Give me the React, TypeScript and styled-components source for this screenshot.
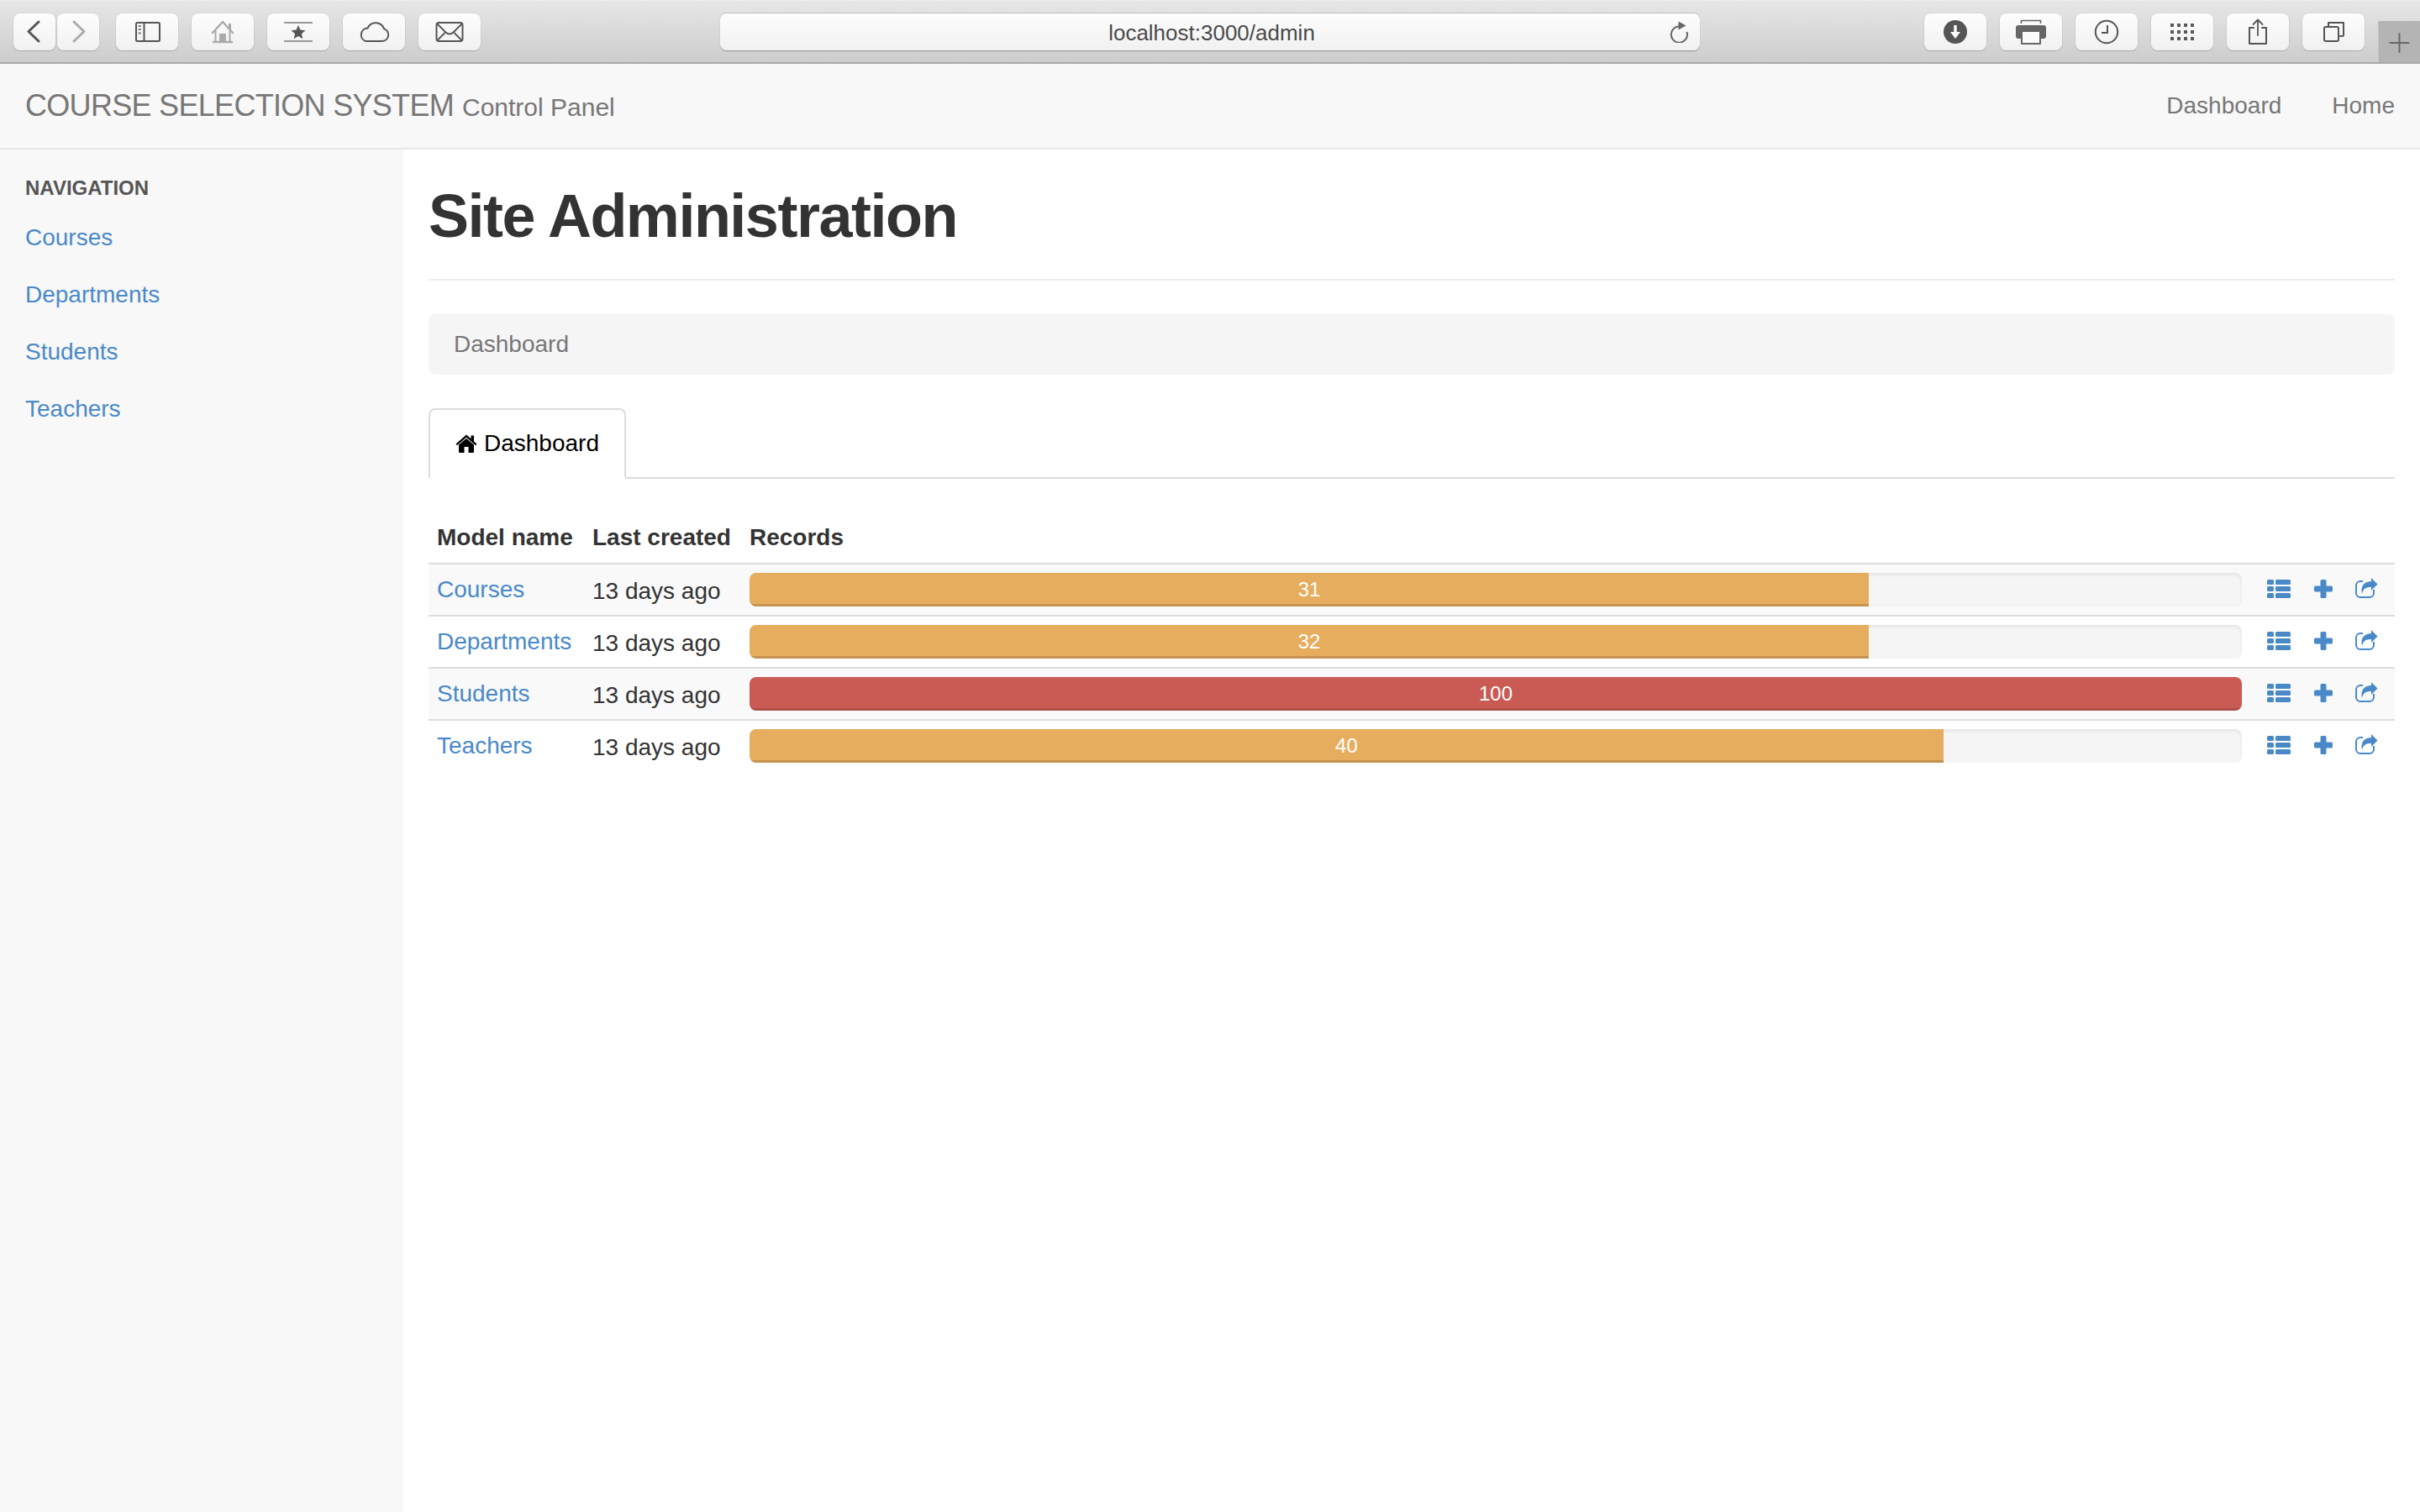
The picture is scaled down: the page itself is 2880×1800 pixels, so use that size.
import React from "react";
import styled, { createGlobalStyle } from "styled-components";

const Global = createGlobalStyle`
  html, body { margin: 0; padding: 0; background: #fff; }
  body { font-family: "Liberation Sans", Arial, sans-serif; font-size: 28px; line-height: 40px; color: #333; }
  * { box-sizing: border-box; }
`;

const LINK = "#4a89c8";

const Page = styled.div`
  display: flex;
  flex-direction: column;
  min-height: 100vh;
`;

/* ---------- browser chrome ---------- */
const Chrome = styled.header`
  display: flex;
  height: 76px;
  padding: 16px 0 0 16px;
  background: linear-gradient(#e6e6e6, #cdcdcd);
  border-top: 1px solid #efefef;
  border-bottom: 2px solid #aaaaaa;
`;
const ChromeGroup = styled.div<{ $gap: number; $left?: number }>`
  display: flex;
  gap: ${(p) => p.$gap}px;
  margin-left: ${(p) => p.$left ?? 0}px;
  margin-top: -1px;
`;
const ToolButton = styled.div<{ $w: number }>`
  width: ${(p) => p.$w}px;
  height: 44px;
  border-radius: 8px;
  background: linear-gradient(#fdfdfd, #f1f1f1);
  box-shadow: 0 1px 1px #a8a8a8, 0 0 0 1px rgba(0, 0, 0, 0.04);
  display: flex;
  svg { display: block; }
`;
const NavPair = styled.div`
  display: flex;
  gap: 2px;
  margin-right: 4px;
`;
const Address = styled.div`
  width: 1166px;
  height: 44px;
  margin-left: 285px;
  margin-top: -1px;
  border-radius: 8px;
  background: linear-gradient(#fdfdfd, #f1f1f1);
  box-shadow: 0 1px 1px #8f8f8f, 0 -1px 0 #bdbdbd;
  display: grid;
  grid-template-columns: 1fr auto 1fr;
  align-items: center;
  font-size: 26px;
  color: #4a4a4a;
`;
const AddressText = styled.span`
  grid-column: 2;
  position: relative;
  left: 2px;
  top: 1px;
`;
const ReloadSlot = styled.span`
  grid-column: 3;
  justify-self: end;
  display: flex;
  margin-right: 12px;
`;
const NewTab = styled.div`
  width: 50px;
  height: 49px;
  margin-left: 16px;
  margin-top: 8px;
  background: #b4b4b4;
  border-left: 1px solid #c4c4c4;
  display: flex;
`;

const IconBox = ({ w, children }: { w: number; children: React.ReactNode }) => (
  <svg width={w} height={44} viewBox={`0 0 ${w} 44`} fill="none" strokeLinecap="round" strokeLinejoin="round">
    {children}
  </svg>
);

const Back = () => (
  <IconBox w={50}><path d="M30 10 L18 21.5 L30 33" stroke="#555" strokeWidth="3" /></IconBox>
);
const Forward = () => (
  <IconBox w={50}><path d="M20 10 L32 21.5 L20 33" stroke="#aaa" strokeWidth="3" /></IconBox>
);
const SidebarIcon = () => (
  <IconBox w={74}>
    <rect x="24" y="11" width="28" height="22" rx="1.5" stroke="#555" strokeWidth="2" />
    <path d="M33.5 11 V33" stroke="#555" strokeWidth="2" />
    <path d="M26.5 15 H30 M26.5 19 H30 M26.5 23.5 H30" stroke="#888" strokeWidth="2" strokeLinecap="butt" />
  </IconBox>
);
const HomeIcon = () => (
  <IconBox w={74}>
    <path d="M25 23 L37 10 L49 23" stroke="#aaa" strokeWidth="2.4" />
    <path d="M28.5 21 V33 M45.5 21 V33" stroke="#aaa" strokeWidth="2" />
    <path d="M25 34 H49" stroke="#aaa" strokeWidth="2.4" strokeLinecap="butt" />
    <rect x="33" y="24" width="8" height="9" fill="#aaa" />
    <rect x="44" y="12" width="3" height="7" fill="#aaa" />
  </IconBox>
);
const StarIcon = () => (
  <IconBox w={74}>
    <path d="M20 11 H54 M20 33 H54" stroke="#999" strokeWidth="2" strokeLinecap="butt" />
    <path d="M37 14 L39.4 19.6 L45.5 20.2 L40.9 24.2 L42.3 30.2 L37 27 L31.7 30.2 L33.1 24.2 L28.5 20.2 L34.6 19.6 Z" fill="#555" />
  </IconBox>
);
const CloudIcon = () => (
  <IconBox w={74}>
    <path d="M27 33 H47 A7.6 7.6 0 0 0 49 18.2 A10.5 10.5 0 0 0 29.5 17.5 A8 8 0 0 0 27 33 Z" stroke="#555" strokeWidth="2" />
  </IconBox>
);
const MailIcon = () => (
  <IconBox w={74}>
    <rect x="21.5" y="11" width="31" height="22" rx="3" stroke="#555" strokeWidth="2" />
    <path d="M22 12 L32.5 22.5 Q37 26.5 41.5 22.5 L52 12 M22.5 32 L31 23.5 M51.5 32 L43 23.5" stroke="#555" strokeWidth="1.8" />
  </IconBox>
);
const DownloadIcon = () => (
  <IconBox w={74}>
    <circle cx="37" cy="22" r="14" fill="#555" />
    <path d="M35.3 14 H38.7 V22 H43 L37 30 L31 22 H35.3 Z" fill="#fff" />
  </IconBox>
);
const PrintIcon = () => (
  <IconBox w={74}>
    <path d="M25.5 12 V8.5 H48.5 V12" stroke="#666" strokeWidth="1.6" strokeLinecap="butt" strokeLinejoin="miter" />
    <path d="M22 14 H52 A3 3 0 0 1 55 17 V27 A3 3 0 0 1 52 30 H22 A3 3 0 0 1 19 27 V17 A3 3 0 0 1 22 14 Z" fill="#666" />
    <rect x="26" y="21" width="22" height="15" fill="#fbfbfb" stroke="#666" strokeWidth="2" />
  </IconBox>
);
const ClockIcon = () => (
  <IconBox w={74}>
    <circle cx="37" cy="22" r="13.2" stroke="#555" strokeWidth="2" />
    <path d="M38 14 V23 H31" stroke="#555" strokeWidth="2" strokeLinecap="butt" strokeLinejoin="miter" />
  </IconBox>
);
const GridIcon = () => {
  const cells: React.ReactNode[] = [];
  [12, 20, 28].forEach((y) =>
    [23, 31, 39, 47].forEach((x) =>
      cells.push(<rect key={`${x}-${y}`} x={x} y={y} width="4" height="4" fill="#5a5a5a" />)
    )
  );
  return <IconBox w={74}>{cells}</IconBox>;
};
const ShareIcon = () => (
  <IconBox w={74}>
    <path d="M32 17 H27 V36 H47 V17 H42" stroke="#555" strokeWidth="2" />
    <path d="M37 7.5 V26 M31.5 13 L37 7.5 L42.5 13" stroke="#555" strokeWidth="1.8" />
  </IconBox>
);
const TabsIcon = () => (
  <IconBox w={74}>
    <rect x="26" y="16" width="17" height="17" rx="2" stroke="#555" strokeWidth="2" />
    <path d="M31 15 V11 H49 V26 Q49 27 47.5 27 H45" stroke="#555" strokeWidth="2" />
  </IconBox>
);

/* ---------- site navbar ---------- */
const Navbar = styled.nav`
  height: 102px;
  padding: 0 30px;
  background: #f8f8f8;
  border-bottom: 2px solid #e7e7e7;
  display: flex;
  align-items: center;
  color: #777;
`;
const Brand = styled.div`
  font-size: 36px;
  letter-spacing: -0.7px;
  display: flex;
  align-items: baseline;
  gap: 10px;
  padding-top: 2px;
  white-space: nowrap;
`;
const BrandSmall = styled.span`
  font-size: 30px;
  letter-spacing: 0;
`;
const NavLinks = styled.div`
  margin-left: auto;
  display: flex;
  gap: 60px;
`;

/* ---------- layout ---------- */
const Body = styled.div`
  flex: 1;
  display: flex;
`;
const Sidebar = styled.aside`
  width: 480px;
  flex: none;
  padding-top: 29px;
  background: #f8f8f8;
`;
const SideHeader = styled.div`
  padding: 0 30px;
  margin-bottom: 8px;
  font-size: 24px;
  line-height: 34px;
  font-weight: 700;
  color: #555;
`;
const SideLink = styled.a`
  display: block;
  padding: 14px 30px;
  color: ${LINK};
`;
const Main = styled.main`
  flex: 1;
  min-width: 0;
  padding: 40px 30px 0;
`;
const Title = styled.h1`
  margin: 0 0 40px;
  padding-bottom: 35px;
  border-bottom: 2px solid #eee;
  font-size: 72px;
  line-height: 79px;
  font-weight: 700;
  letter-spacing: -1.5px;
  color: #333;
`;
const Crumb = styled.div`
  height: 72px;
  padding: 16px 30px;
  margin-bottom: 40px;
  border-radius: 8px;
  background: #f5f5f5;
  color: #777;
`;
const TabBar = styled.div`
  display: flex;
  height: 84px;
  margin-bottom: 40px;
  border-bottom: 2px solid #ddd;
`;
const Tab = styled.div`
  height: 84px;
  padding: 20px 30px;
  display: flex;
  align-items: center;
  gap: 8px;
  background: #fff;
  border: 2px solid #ddd;
  border-bottom-color: #fff;
  border-radius: 8px 8px 0 0;
  color: #000;
`;

/* ---------- table ---------- */
const Table = styled.table`
  width: 100%;
  table-layout: fixed;
  border-collapse: collapse;
`;
const ColName = styled.col`
  width: 185px;
`;
const ColCreated = styled.col`
  width: 187px;
`;
const ColActions = styled.col`
  width: 172px;
`;
const Head = styled.th`
  padding: 10px;
  text-align: left;
  font-weight: 700;
  color: #333;
  white-space: nowrap;
  border-bottom: 2px solid #ddd;
`;
const Row = styled.tr<{ $striped: boolean }>`
  background: ${(p) => (p.$striped ? "#f9f9f9" : "#fff")};
`;
const Cell = styled.td`
  height: 62px;
  padding: 10px;
  vertical-align: top;
  border-top: 2px solid #ddd;
`;
const ModelLink = styled.a`
  color: ${LINK};
  white-space: nowrap;
`;
const AgoCell = styled(Cell)`
  padding: 12px 10px 8px;
  white-space: nowrap;
`;
const Track = styled.div`
  height: 40px;
  border-radius: 8px;
  overflow: hidden;
  background: #f5f5f5;
  box-shadow: inset 0 2px 4px rgba(0, 0, 0, 0.08);
`;
const Fill = styled.div<{ $tone: "warn" | "danger" }>`
  height: 100%;
  background: ${(p) => (p.$tone === "danger" ? "#ca5b54" : "#e7ad5e")};
  box-shadow: inset 0 -3px 0 rgba(0, 0, 0, 0.15);
  color: #fff;
  font-size: 24px;
  line-height: 40px;
  text-align: center;
`;
const Actions = styled.div`
  display: flex;
  align-items: center;
  height: 38px;
  padding-left: 10px;
  color: ${LINK};
  svg { display: block; }
`;
const ActionList = styled.a`
  margin-right: 28px;
`;
const ActionAdd = styled.a`
  margin-right: 27px;
`;
const ActionShare = styled.a`
  margin-top: -3px;
`;

const ListGlyph = () => (
  <svg width="28" height="22" viewBox="0 0 28 22" fill="currentColor">
    {[0, 8, 16].map((y) => (
      <g key={y}>
        <rect x="0" y={y} width="8" height="6" rx="1.5" />
        <rect x="10" y={y} width="18" height="6" rx="1.5" />
      </g>
    ))}
  </svg>
);
const PlusGlyph = () => (
  <svg width="22" height="22" viewBox="0 0 22 22" fill="currentColor">
    <rect x="7.5" y="0" width="7" height="22" rx="1.6" />
    <rect x="0" y="7.5" width="22" height="7" rx="1.6" />
  </svg>
);
const ShareGlyph = () => (
  <svg width="27" height="24" viewBox="0 0 27 24" fill="none">
    <path d="M9 4 H6 A5 5 0 0 0 1 9 V18 A5 5 0 0 0 6 23 H17 A5 5 0 0 0 22 18 V14" stroke="currentColor" strokeWidth="2" />
    <path d="M19 0 L26.5 7.5 L19 15 V11 C13 11 9.5 12.5 8 19 C6 10 10 4.5 19 4 Z" fill="currentColor" />
  </svg>
);
const HouseGlyph = () => (
  <svg width="26" height="22" viewBox="0 0 26 22" fill="#000">
    <path d="M13 5 L4 12.5 V21 A1 1 0 0 0 5 22 H10.5 V15 H15.5 V22 H21 A1 1 0 0 0 22 21 V12.5 Z" />
    <path d="M0.5 11.5 L13 0.5 L18.5 5.2 V1.5 H22 V8.5 L25.5 11.5 L24 13.2 L13 3.8 L2 13.2 Z" />
  </svg>
);

const rows = [
  { name: "Courses", value: 31, pct: 75, tone: "warn" as const },
  { name: "Departments", value: 32, pct: 75, tone: "warn" as const },
  { name: "Students", value: 100, pct: 100, tone: "danger" as const },
  { name: "Teachers", value: 40, pct: 80, tone: "warn" as const },
];

export default function App() {
  return (
    <Page>
      <Global />
      <Chrome>
        <ChromeGroup $gap={16}>
          <NavPair>
            <ToolButton $w={50}><Back /></ToolButton>
            <ToolButton $w={50}><Forward /></ToolButton>
          </NavPair>
          <ToolButton $w={74}><SidebarIcon /></ToolButton>
          <ToolButton $w={74}><HomeIcon /></ToolButton>
          <ToolButton $w={74}><StarIcon /></ToolButton>
          <ToolButton $w={74}><CloudIcon /></ToolButton>
          <ToolButton $w={74}><MailIcon /></ToolButton>
        </ChromeGroup>
        <Address>
          <AddressText>localhost:3000/admin</AddressText>
          <ReloadSlot>
            <svg width="24" height="26" viewBox="0 0 24 26" fill="none">
              <path d="M11 6.5 A9.6 9.6 0 1 0 20.5 13" stroke="#666" strokeWidth="2" />
              <path d="M10.5 0.5 L19.5 5.5 L10.5 10.5 Z" fill="#666" />
            </svg>
          </ReloadSlot>
        </Address>
        <ChromeGroup $gap={16} $left={267}>
          <ToolButton $w={74}><DownloadIcon /></ToolButton>
          <ToolButton $w={74}><PrintIcon /></ToolButton>
          <ToolButton $w={74}><ClockIcon /></ToolButton>
          <ToolButton $w={74}><GridIcon /></ToolButton>
          <ToolButton $w={74}><ShareIcon /></ToolButton>
          <ToolButton $w={74}><TabsIcon /></ToolButton>
        </ChromeGroup>
        <NewTab>
          <svg width="50" height="49" viewBox="0 0 50 49" fill="none">
            <path d="M25 14 V38 M13 26 H37" stroke="#666" strokeWidth="2" />
          </svg>
        </NewTab>
      </Chrome>
      <Navbar>
        <Brand>
          COURSE SELECTION SYSTEM
          <BrandSmall>Control Panel</BrandSmall>
        </Brand>
        <NavLinks>
          <span>Dashboard</span>
          <span>Home</span>
        </NavLinks>
      </Navbar>
      <Body>
        <Sidebar>
          <SideHeader>NAVIGATION</SideHeader>
          {rows.map((r) => (
            <SideLink key={r.name}>{r.name}</SideLink>
          ))}
        </Sidebar>
        <Main>
          <Title>Site Administration</Title>
          <Crumb>Dashboard</Crumb>
          <TabBar>
            <Tab>
              <HouseGlyph />
              Dashboard
            </Tab>
          </TabBar>
          <Table>
            <colgroup>
              <ColName />
              <ColCreated />
              <col />
              <ColActions />
            </colgroup>
            <thead>
              <tr>
                <Head>Model name</Head>
                <Head>Last created</Head>
                <Head>Records</Head>
                <Head />
              </tr>
            </thead>
            <tbody>
              {rows.map((r, i) => (
                <Row key={r.name} $striped={i % 2 === 0}>
                  <Cell><ModelLink>{r.name}</ModelLink></Cell>
                  <AgoCell>13 days ago</AgoCell>
                  <Cell>
                    <Track>
                      <Fill $tone={r.tone} style={{ width: `${r.pct}%` }}>{r.value}</Fill>
                    </Track>
                  </Cell>
                  <Cell>
                    <Actions>
                      <ActionList><ListGlyph /></ActionList>
                      <ActionAdd><PlusGlyph /></ActionAdd>
                      <ActionShare><ShareGlyph /></ActionShare>
                    </Actions>
                  </Cell>
                </Row>
              ))}
            </tbody>
          </Table>
        </Main>
      </Body>
    </Page>
  );
}
